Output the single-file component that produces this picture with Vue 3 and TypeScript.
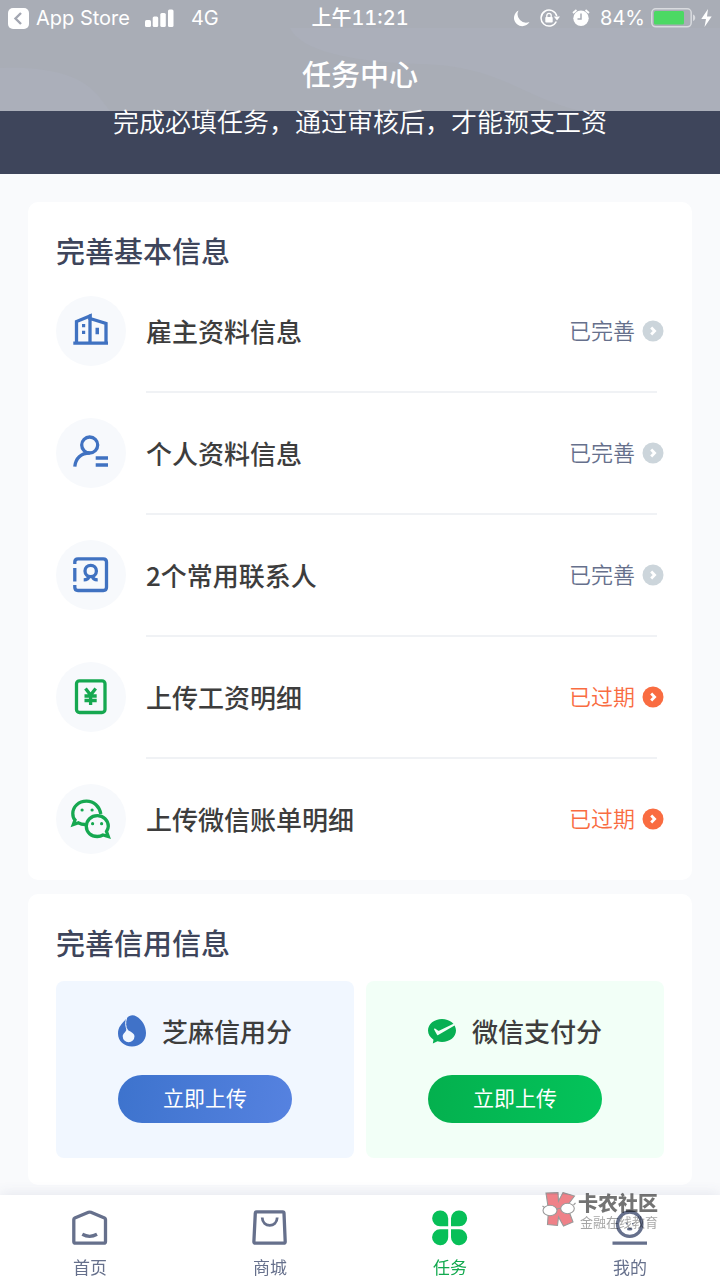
<script setup lang="ts">
import { ref } from 'vue'

type IconName = 'building' | 'person' | 'contact' | 'salary' | 'wechat'

interface Task {
  icon: IconName
  label: string
  status: string
  expired: boolean
}

interface Tab {
  key: string
  label: string
}

const tasks: Task[] = [
  { icon: 'building', label: '雇主资料信息', status: '已完善', expired: false },
  { icon: 'person', label: '个人资料信息', status: '已完善', expired: false },
  { icon: 'contact', label: '2个常用联系人', status: '已完善', expired: false },
  { icon: 'salary', label: '上传工资明细', status: '已过期', expired: true },
  { icon: 'wechat', label: '上传微信账单明细', status: '已过期', expired: true },
]

const tabs: Tab[] = [
  { key: 'home', label: '首页' },
  { key: 'mall', label: '商城' },
  { key: 'task', label: '任务' },
  { key: 'mine', label: '我的' },
]

const activeTab = ref('task')
</script>

<template>
  <div class="page">
    <header class="top">
      <svg class="waves" viewBox="0 0 720 111" preserveAspectRatio="none" aria-hidden="true">
        <path d="M0 68C50 66 84 76 100 98L110 111H0Z" fill="#abafba" />
        <path d="M290 28C300 50 350 62 420 64C500 66 520 96 580 111H720V28Z" fill="#abafba" />
      </svg>
      <div class="status-bar">
        <div class="status-left">
          <button class="back" type="button">
            <svg width="21" height="21" viewBox="0 0 21 21" aria-hidden="true">
              <rect width="21" height="21" rx="5" fill="#fff" />
              <path d="M13 5L7.500 10.500L13 16" fill="none" stroke="#a3a7b2" stroke-width="2.400" />
            </svg>
            <span>App Store</span>
          </button>
          <svg width="29" height="18" viewBox="0 0 29 18" fill="#fff" aria-hidden="true">
            <rect x="0" y="11" width="6" height="7" rx="1.500" />
            <rect x="7.700" y="7.500" width="5.500" height="10.500" rx="1.500" />
            <rect x="15.300" y="4" width="5.500" height="14" rx="1.500" />
            <rect x="23" y="0.500" width="5.500" height="17.500" rx="1.500" />
          </svg>
          <span class="network">4G</span>
        </div>
        <span class="time">上午11:21</span>
        <div class="status-right">
          <svg width="17" height="17" viewBox="0 0 17 17" fill="#fff" aria-hidden="true">
            <path d="M5.500 0.500A8.300 8.300 0 1 0 16.500 12A8.500 8.500 0 0 1 5.500 0.500Z" />
          </svg>
          <svg class="lock" width="20" height="18" viewBox="0 0 20 18" fill="none" stroke="#fff" stroke-width="1.500" aria-hidden="true">
            <path d="M16.300 12.500A8 8 0 1 1 16.800 7" />
            <path d="M13.800 7.500H20L17 11.500Z" fill="#fff" stroke="none" />
            <rect x="5.300" y="8" width="7.400" height="5.500" rx="0.800" fill="#fff" stroke="none" />
            <path d="M6.800 8.500V6.500A2.200 2.200 0 0 1 11.200 6.500V8.500" stroke-width="1.300" />
          </svg>
          <svg class="alarm" width="18" height="18" viewBox="0 0 18 18" aria-hidden="true">
            <circle cx="9" cy="9.300" r="7.700" fill="#fff" />
            <path d="M1 4L4.500 1M17 4L13.500 1" stroke="#fff" stroke-width="1.800" />
            <path d="M9 4.500V10H5.500" fill="none" stroke="#a9adb7" stroke-width="1.500" />
          </svg>
          <span class="percent">84%</span>
          <svg width="45" height="20" viewBox="0 0 45 20" aria-hidden="true">
            <rect x="0.800" y="0.800" width="39.400" height="18" rx="4" fill="none" stroke="#d9dbdf" stroke-width="1.500" />
            <rect x="3" y="3" width="30" height="13.500" rx="1.500" fill="#4cd964" />
            <path d="M42 6.500C45 7.500 45 12 42 13Z" fill="#d9dbdf" />
          </svg>
          <svg class="bolt" width="11" height="18" viewBox="0 0 11 18" fill="#fff" aria-hidden="true">
            <path d="M7 0L0.300 10H5L3.500 18L10.700 7.500H6Z" />
          </svg>
        </div>
      </div>
      <h1>任务中心</h1>
    </header>

    <p class="banner">完成必填任务，通过审核后，才能预支工资</p>

    <main>
      <section class="card basic">
        <h2>完善基本信息</h2>
        <ul class="tasks">
          <li v-for="task in tasks" :key="task.label">
            <button class="task" type="button">
              <span class="badge">
                <svg v-if="task.icon === 'building'" class="glyph blue" viewBox="0 0 70 70" aria-hidden="true">
                  <path d="M20.500 46V25.500L34 20V46M34 22.500L50 27.500V46M17.300 47.200H52" />
                  <path class="solid" d="M26 28h3.200v3.200H26zM26 34.700h3.200v3.300H26zM39.500 31.700h3.500v6.600h-3.500zM32.400 19L35.600 17.500V24H32.400z" />
                </svg>
                <svg v-else-if="task.icon === 'person'" class="glyph blue" viewBox="0 0 70 70" aria-hidden="true">
                  <circle cx="33.700" cy="27" r="8" />
                  <path d="M33.700 35C25 35 19.500 40.500 18.800 48.700M39.700 40H52M39.700 47H52" />
                </svg>
                <svg v-else-if="task.icon === 'contact'" class="glyph blue" viewBox="0 0 70 70" aria-hidden="true">
                  <path d="M18.800 24V22Q18.800 18.800 22 18.800H47.300Q50.500 18.800 50.500 22V47.300Q50.500 50.500 47.300 50.500H22Q18.800 50.500 18.800 47.300V45M18.800 28V41.500" />
                  <circle cx="34.700" cy="31" r="5.700" />
                  <path d="M27.700 39.800C31 39.800 32.500 39 32.800 36.500M41.700 39.800C38.400 39.800 36.900 39 36.600 36.500" />
                </svg>
                <svg v-else-if="task.icon === 'salary'" class="glyph green" viewBox="0 0 70 70" aria-hidden="true">
                  <rect x="20.500" y="18.800" width="28.500" height="31.700" rx="3" />
                  <path d="M29.500 26.500L34.600 33L39.700 26.500M28.500 34H40.700M28.500 38.500H40.700M34.600 33V43" />
                </svg>
                <svg v-else class="glyph green" viewBox="0 0 70 70" aria-hidden="true">
                  <path d="M44.800 30C43.500 22.500 38 17.200 30.500 17.200C22.500 17.200 16.800 23 16.800 29.500C16.800 33 18.500 35.500 19 36L17.300 40.500L22.500 38.800C24.500 40 26.500 40.500 29 40.500" />
                  <path d="M50.500 47.500C51.500 46 52.300 44.300 52.300 42.300C52.300 36.200 47.400 31.700 41.300 31.700C35.200 31.700 30.300 36.200 30.300 42.300C30.300 48.400 35.200 52.500 41.300 52.500C43.500 52.500 45.300 52 47 51L52.300 52.500Z" />
                  <path class="solid" d="M24.500 26a1.600 1.600 0 1 1 3.200 0a1.600 1.600 0 1 1-3.200 0M34.500 26a1.600 1.600 0 1 1 3.200 0a1.600 1.600 0 1 1-3.200 0M35 39.700a1.600 1.600 0 1 1 3.200 0a1.600 1.600 0 1 1-3.200 0M44 39.700a1.600 1.600 0 1 1 3.200 0a1.600 1.600 0 1 1-3.200 0" />
                </svg>
              </span>
              <span class="label">{{ task.label }}</span>
              <span class="state" :class="{ expired: task.expired }">
                {{ task.status }}
                <svg width="22" height="22" viewBox="0 0 22 22" aria-hidden="true">
                  <circle cx="11" cy="11" r="10.500" fill="currentColor" />
                  <path d="M9.200 7.500L12.600 11L9.200 14.500" fill="none" stroke="#fff" stroke-width="2.800" />
                </svg>
              </span>
            </button>
          </li>
        </ul>
      </section>

      <section class="card credit">
        <h2>完善信用信息</h2>
        <div class="panels">
          <article class="panel sesame">
            <h3>
              <svg width="28" height="32" viewBox="0 0 28 32" aria-hidden="true">
                <path d="M8.500 3.500C11 0.500 14.500 -0.700 18.500 1.500C24 4.700 28 11 28 18C28 26 22 31.500 14 31.500C6 31.500 0 26 0 18.500C0 12 3.500 9 8.500 3.500Z" fill="#4072c8" />
                <path d="M8.600 3C7 8 7.500 11.500 9.500 15.500" fill="none" stroke="#f1f7ff" stroke-width="1" />
                <path d="M8.500 13C9.500 16.500 16.500 17 16.500 21.300A5.900 5.900 0 0 1 4.700 21.300C4.700 18 9 17 8.500 13Z" fill="#f1f7ff" />
              </svg>
              芝麻信用分
            </h3>
            <button type="button">立即上传</button>
          </article>
          <article class="panel wepay">
            <h3>
              <svg width="28" height="25" viewBox="0 0 28 25" aria-hidden="true">
                <path d="M14 0C6.300 0 0 5 0 11.500C0 15.300 2.200 18.500 5.500 20.700L4.800 24.500L9.500 22.300C11 22.800 12.500 23 14 23C21.700 23 28 18 28 11.500C28 5 21.700 0 14 0Z" fill="#07b053" />
                <path d="M6 10.200L9 15.800Q9.400 16.400 10.200 15.900L27 6.300L25.500 4.800L11 11.700Q10.400 12 9.900 11.600L7 9.500Q6 9.200 6 10.200Z" fill="#f2fff7" />
              </svg>
              微信支付分
            </h3>
            <button type="button">立即上传</button>
          </article>
        </div>
      </section>
    </main>

    <nav class="tabs">
      <a
        v-for="tab in tabs"
        :key="tab.key"
        href="#"
        :class="{ active: tab.key === activeTab }"
        @click.prevent="activeTab = tab.key"
      >
        <svg width="36" height="36" viewBox="0 0 36 36" fill="none" stroke="currentColor" stroke-width="3.300" aria-hidden="true">
          <template v-if="tab.key === 'home'">
            <path d="M1.800 9.500Q1.800 8.500 2.800 8L16.500 2.300Q17.700 1.800 18.900 2.300L32.500 8Q33.500 8.500 33.500 9.500V31.500Q33.500 33.200 31.800 33.200H3.500Q1.800 33.200 1.800 31.500Z" />
            <path d="M10.300 24.300Q17.700 28.300 25 24.300" />
          </template>
          <template v-else-if="tab.key === 'mall'">
            <path d="M4.700 1.800H30.700Q32 1.800 32 3.100L33.200 31.500Q33.300 33.200 31.600 33.200H3.500Q1.800 33.200 1.900 31.500L3.300 3.100Q3.400 1.800 4.700 1.800Z" />
            <path d="M10.200 7.500C10.500 18 24.900 18 25.200 7.500" stroke-width="2.800" />
          </template>
          <g v-else-if="tab.key === 'task'" class="petals">
            <path d="M8 0.500A7.800 7.800 0 0 1 16.200 8.500V16.200H8A7.800 7.800 0 0 1 8 0.500Z" />
            <path d="M27.300 0.500A7.800 7.800 0 0 0 19 8.500V16.200H27.300A7.800 7.800 0 0 0 27.300 0.500Z" />
            <path d="M8 35.200A7.800 7.800 0 0 0 16.200 27.200V19.300H8A7.800 7.800 0 0 0 8 35.200Z" />
            <path d="M27.300 35.200A7.800 7.800 0 0 1 19 27.200V19.300H27.300A7.800 7.800 0 0 1 27.300 35.200Z" />
          </g>
          <template v-else>
            <circle cx="17.700" cy="14.200" r="12.200" />
            <ellipse cx="17.700" cy="19" rx="2.800" ry="1.600" fill="currentColor" stroke="none" />
            <path d="M14.700 13V14.500M20.700 13V14.500" stroke-width="1.200" />
            <path d="M0.500 33.200H35" />
          </template>
        </svg>
        <span>{{ tab.label }}</span>
      </a>
      <div class="stamp">
        <svg width="34" height="36" viewBox="0 0 34 36" stroke="#777" stroke-width="1.100" aria-hidden="true">
          <path d="M4 1L16 0.600L16.500 9L21 0.600L32.500 4L25 14L31 30L21.500 34L16.500 25L15.500 33.500L5.500 32.500L6.500 18Z" fill="#ea5660" />
          <ellipse cx="8" cy="18.500" rx="7" ry="5.200" fill="#fff" />
          <ellipse cx="25.500" cy="16.500" rx="6.800" ry="5.200" fill="#fff" />
          <path d="M15 17.500Q17 15.500 18.800 16.800M0.500 14L2.500 15.500M33.500 11L31.500 13" fill="none" />
        </svg>
        <div>
          <strong>卡农社区</strong>
          <small>金融在线教育</small>
        </div>
      </div>
    </nav>
  </div>
</template>

<style>
body {
  margin: 0;
  background: #f9fafc;
}
</style>

<style scoped>
.page {
  display: flex;
  flex-direction: column;
  min-height: 100vh;
  background: #f9fafc;
  font-family: "Inter", "Noto Sans CJK SC", sans-serif;
  color: #3d3d3d;
}

h1, h2, h3, p, ul {
  margin: 0;
  padding: 0;
}

button {
  margin: 0;
  padding: 0;
  border: 0;
  background: none;
  color: inherit;
  font: inherit;
  cursor: pointer;
}

svg {
  display: block;
  flex: none;
}

.top {
  position: relative;
  background: #a9adb6;
  color: #fff;
}

.waves {
  position: absolute;
  inset: 0;
  width: 100%;
  height: 100%;
}

.status-bar {
  position: relative;
  display: grid;
  grid-template-columns: 1fr auto 1fr;
  align-items: center;
  height: 36px;
  padding: 0 8px;
  font-size: 20px;
  line-height: 24px;
}

.status-left,
.status-right,
.back {
  display: flex;
  align-items: center;
}

.back {
  gap: 7px;
  margin-right: 15px;
}

.network {
  margin-left: 17px;
}

.time {
  font-weight: 500;
  font-variant-numeric: tabular-nums;
}

.status-right {
  justify-content: flex-end;
}

.lock {
  margin-left: 10px;
}

.alarm {
  margin-left: 12px;
}

.percent {
  margin: 0 6px 0 10px;
}

.bolt {
  margin-left: 5px;
}

h1,
h2,
h3,
.label {
  font-family: "Noto Sans CJK SC", sans-serif;
  font-weight: 500;
}

h1 {
  position: relative;
  height: 75px;
  font-size: 29px;
  line-height: 74px;
  text-align: center;
}

.banner {
  position: relative;
  height: 63px;
  background: #3e455b;
  color: #fff;
  font-size: 26px;
  font-weight: 350;
  line-height: 24px;
  text-align: center;
}

main {
  display: flex;
  flex-direction: column;
  gap: 14px;
  padding: 28px 28px 10px;
}

.card {
  padding: 28px 28px 0;
  border-radius: 10px;
  background: #fff;
}

.basic {
  padding-bottom: 1px;
}

.credit {
  padding-bottom: 27px;
}

h2 {
  color: #3e455b;
  font-size: 29px;
  line-height: 41px;
}

.tasks {
  list-style: none;
}

.tasks li + li::before {
  content: "";
  display: block;
  height: 2px;
  margin: 0 7px 0 90px;
  background: #f0f2f5;
}

.task {
  display: flex;
  align-items: center;
  width: 100%;
  height: 120px;
  text-align: left;
}

.badge {
  flex: none;
  width: 70px;
  height: 70px;
  margin-right: 20px;
  border-radius: 50%;
  background: #f7f9fc;
}

.glyph {
  width: 70px;
  height: 70px;
  fill: none;
  stroke: currentColor;
  stroke-width: 3.3;
}

.glyph .solid {
  fill: currentColor;
  stroke: none;
}

.blue {
  color: #4072c1;
}

.green {
  color: #16a850;
}

.label {
  flex: 1;
  font-size: 26px;
  line-height: 36px;
}

.state {
  display: flex;
  align-items: center;
  gap: 7px;
  color: #66708c;
  font-size: 22px;
  font-weight: 350;
  line-height: 30px;
}

.state svg {
  color: #ccd5db;
}

.state.expired,
.state.expired svg {
  color: #f96c41;
}

.panels {
  display: grid;
  grid-template-columns: 1fr 1fr;
  gap: 12px;
  margin-top: 18px;
}

.panel {
  display: flex;
  flex-direction: column;
  align-items: center;
  gap: 26px;
  padding: 32px 0 35px;
  border-radius: 8px;
}

.sesame {
  background: #f1f7ff;
}

.wepay {
  background: #f2fff7;
}

h3 {
  display: flex;
  align-items: center;
  gap: 16px;
  font-size: 26px;
  line-height: 36px;
}

.panel button {
  width: 174px;
  height: 48px;
  border-radius: 24px;
  color: #fff;
  font-size: 21px;
  line-height: 30px;
}

.sesame button {
  background: linear-gradient(100deg, #3d73cd, #5682e0);
}

.wepay button {
  background: linear-gradient(100deg, #04b04e, #04c45b);
}

.tabs {
  position: sticky;
  bottom: 0;
  display: grid;
  grid-template-columns: repeat(4, 1fr);
  margin-top: auto;
  background: #fff;
  box-shadow: 0 -2px 12px rgba(70, 75, 130, 0.1);
}

.tabs a {
  display: flex;
  flex-direction: column;
  align-items: center;
  gap: 10px;
  padding: 15px 0 0;
  height: 70px;
  color: #66708c;
  font-size: 17px;
  line-height: 24px;
  text-decoration: none;
}

.tabs a.active {
  color: #12a94e;
}

.petals {
  fill: #07bf58;
  stroke: none;
}

.stamp {
  position: absolute;
  top: -3px;
  right: 62px;
  display: flex;
  gap: 2px;
  color: #444;
  opacity: 0.75;
  mix-blend-mode: multiply;
  pointer-events: none;
}

.stamp div {
  display: flex;
  flex-direction: column;
}

.stamp strong {
  font-size: 20px;
  font-weight: 900;
  line-height: 24px;
}

.stamp small {
  padding-left: 2px;
  color: #888;
  font-size: 13px;
  line-height: 12px;
}
</style>
